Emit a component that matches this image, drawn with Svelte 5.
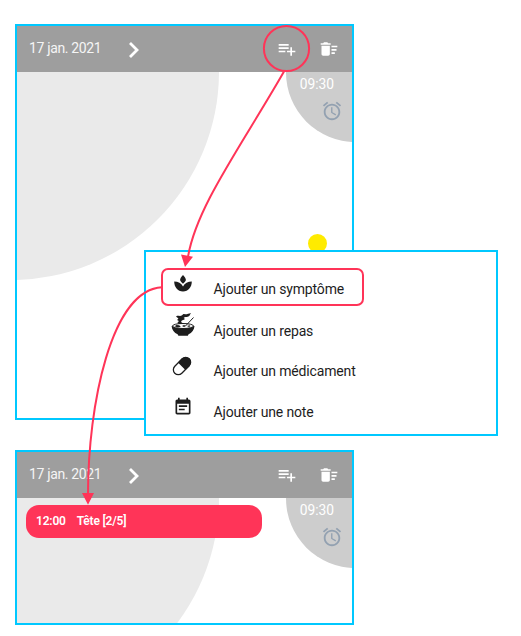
<script>
  const actions = [
    { icon: 'spa', label: 'Ajouter un symptôme', height: 38 },
    { icon: 'bowl', label: 'Ajouter un repas', height: 42 },
    { icon: 'pill', label: 'Ajouter un médicament', height: 39 },
    { icon: 'note', label: 'Ajouter une note', height: 42 }
  ];
</script>

{#snippet dayView(entry)}
  <header>
    <span class="date">17 jan. 2021</span>
    <svg class="chevron" width="14" height="20" viewBox="0 0 14 20"><path d="M3 3l7 7-7 7" fill="none" stroke="#fff" stroke-width="2.800" /></svg>
    <svg class="add" width="20" height="20" viewBox="0 0 24 24"><path fill="#fff" d="M14 10H2v2h12v-2zm0-4H2v2h12V6zm4 8v-4h-2v4h-4v2h4v4h2v-4h4v-2h-4zM2 16h8v-2H2v2z" /></svg>
    <svg class="sweep" width="20" height="20" viewBox="0 0 24 24"><path fill="#fff" d="M15 16h4v2h-4zm0-8h7v2h-7zm0 4h6v2h-6zM3 18c0 1.1.9 2 2 2h6c1.1 0 2-.9 2-2V8H3v10zM14 5h-3l-1-1H6L5 5H2v2h12z" /></svg>
  </header>
  <div class="body">
    <div class="disc large"></div>
    <div class="disc small"></div>
    {#if entry}
      <div class="entry"><span class="hour">{entry.hour}</span><span>{entry.text}</span></div>
    {:else}
      <div class="disc sun"></div>
    {/if}
    <div class="alarm">
      <span>09:30</span>
      <svg width="22" height="22" viewBox="0 0 24 24"><path fill="#93a1b1" d="M12.5 8H11v6l4.75 2.85.75-1.23-4-2.37zm4.837-6.19l4.607 3.845-1.28 1.535-4.61-3.843zm-10.674 0l1.282 1.536L3.337 7.19l-1.28-1.536zM12 4c-4.97 0-9 4.03-9 9s4.03 9 9 9 9-4.03 9-9-4.03-9-9-9zm0 16c-3.86 0-7-3.14-7-7s3.14-7 7-7 7 3.14 7 7-3.14 7-7 7z" /></svg>
    </div>
  </div>
{/snippet}

<main>
  <section class="panel first">{@render dayView(null)}</section>
  <section class="panel second">{@render dayView({ hour: '12:00', text: 'Tête [2/5]' })}</section>

  <ul class="menu">
    {#each actions as action, i}
      <li class:selected={i === 0} style:height="{action.height}px">
        <svg class={action.icon} width="24" height="24" viewBox="0 0 24 24">
          {#if action.icon === 'spa'}
            <path d="M12 2.900c2 1.900 2.900 3.700 2.900 5.200 0 1.100-1.500 2.300-2.900 3.700-1.400-1.400-2.900-2.600-2.900-3.700 0-1.500.9-3.300 2.900-5.200zM3.200 9.600c3.900.1 7.100 1.500 8.800 5 1.700-3.500 4.900-4.900 8.800-5 0 5.500-3.400 10-8.800 10s-8.800-4.500-8.800-10z" />
          {:else if action.icon === 'bowl'}
            <path d="M.6 13h22.900c-.3 4.100-2.600 6.700-5.900 8.300l-.8 1.500H7.400l-.8-1.500C3.200 19.700.9 17.100.6 13z" />
            <ellipse cx="12" cy="13" rx="10.500" ry="2.500" fill="#fff" stroke="#1d1d1d" stroke-width="1" />
            <path d="M3.500 13.300l2-1.300 2.800.3 1.500 1.600-3 .5zM11 13l2-1 2 1-2 1zM16 13l2.400-.8 1.200.9-1.600.8z" />
            <path d="M14.500 13L22.500 4.500" fill="none" stroke="#1d1d1d" stroke-width="1" />
            <path d="M5 3.500c2.300-1.500 4 .4 6.100-1.300C11.800 1.500 12.300.8 13.200 1c2.100.6 4.100-.4 6.700-1.100-1 1.800-1.300 3.300-3.200 3.800-1.400.5-2.700 0-4.100 1.200 1 .4 1.500 1 .8 1.600l-2.600.9-.8 1.700 2.300 1.500-4.300.4-1.700-.9 1.600-2-1.800-1.100 1.300-1.500z" />
          {:else if action.icon === 'pill'}
            <g transform="rotate(-45 12 12)">
              <rect x="0.900" y="6.600" width="22.200" height="10.800" rx="5.400" fill="#fff" stroke="#1d1d1d" stroke-width="1.400" />
              <path d="M11.500 6.200h6.100a5.800 5.800 0 0 1 0 11.600h-6.100z" />
            </g>
          {:else}
            <path d="M17 10H7v2h10v-2zm2-7h-1V1h-2v2H8V1H6v2H5c-1.110 0-2 .9-2 2v14c0 1.100.89 2 2 2h14c1.100 0 2-.9 2-2V5c0-1.100-.9-2-2-2zm0 16H5V8h14v11zm-5-5H7v2h7v-2z" />
          {/if}
        </svg>
        <span>{action.label}</span>
      </li>
    {/each}
  </ul>

  <svg class="links" width="521" height="636" viewBox="0 0 521 636">
    <g fill="none" stroke="#ff3458" stroke-width="2">
      <circle cx="286.500" cy="48.500" r="22.600" />
      <path d="M284 71.500C242 145 196 207 188 257" />
      <path d="M162 287.300C111 290 88 405 88 495" />
    </g>
    <path fill="#ff3458" d="M181 254.500l12 2.200-8 10.300zM82 493h12l-6 11.700z" />
  </svg>
</main>

<style>
  main {
    position: relative;
    box-sizing: border-box;
    width: 521px;
    height: 636px;
    padding: 24px 0 0 15px;
    display: flex;
    flex-direction: column;
    gap: 30px;
    background: #fff;
    font-family: Roboto, sans-serif;
    overflow: hidden;
  }
  svg { display: block; flex: none; overflow: visible; }
  .panel {
    box-sizing: border-box;
    width: 339px;
    border: 2px solid #00c8ff;
    overflow: hidden;
    display: flex;
    flex-direction: column;
  }
  .first { height: 396px; }
  .second { height: 175px; }
  header {
    position: relative;
    z-index: 1;
    height: 46px;
    flex: none;
    display: flex;
    align-items: center;
    background: #9e9e9e;
    color: #f5f5f5;
  }
  .date {
    width: 83px;
    padding: 0 0 2px 12px;
    font-size: 14px;
    letter-spacing: -0.350px;
    white-space: nowrap;
  }
  .chevron { margin-left: 15px; margin-top: 1px; }
  .add { margin-left: 136px; }
  .sweep { margin-left: 22px; }
  .body { position: relative; flex: 1; }
  .disc { position: absolute; border-radius: 50%; }
  .large { left: -214px; top: -208px; width: 416px; height: 416px; background: #eaeaea; }
  .small { left: 269px; top: -69.500px; width: 139px; height: 139px; background: #cdcdcd; }
  .sun { left: 290.500px; top: 161.500px; width: 19.500px; height: 19.500px; background: #ffeb00; }
  .alarm {
    position: absolute;
    top: 4px;
    right: 9px;
    display: flex;
    flex-direction: column;
    align-items: flex-end;
    gap: 7px;
    color: #fff;
    font-size: 13.800px;
    line-height: 17px;
  }
  .alarm span { margin-right: 9px; }
  .entry {
    position: relative;
    display: flex;
    align-items: center;
    box-sizing: border-box;
    width: 236px;
    height: 33px;
    margin: 7px 0 0 9px;
    padding: 0 0 1px 10px;
    gap: 11px;
    border-radius: 13px;
    background: #ff3458;
    color: #fff;
    font-size: 12px;
    letter-spacing: -0.200px;
    font-weight: 600;
  }
  .menu {
    position: absolute;
    left: 144px;
    top: 250px;
    box-sizing: border-box;
    width: 354px;
    height: 186px;
    margin: 0;
    padding: 16px 15px;
    list-style: none;
    border: 2px solid #00c8ff;
    background: #fff;
    color: #1d1d1d;
    font-size: 14px;
    letter-spacing: -0.150px;
  }
  li {
    box-sizing: border-box;
    width: 203px;
    padding: 3px 0 0 10px;
    display: flex;
    align-items: center;
  }
  .selected {
    padding-left: 8px;
    margin-bottom: 2px;
    border: 2px solid #ff3458;
    border-radius: 7px;
  }
  li span { margin-left: 18.500px; white-space: nowrap; }
  li svg { fill: #1d1d1d; margin-top: -10px; }
  li .bowl { margin-top: -12px; }
  li .pill { width: 22px; height: 22px; margin-right: 2px; margin-top: -11px; }
  li .note { width: 20px; height: 20px; margin-left: 2px; margin-right: 2px; }
  .links { position: absolute; z-index: 2; left: 0; top: 0; pointer-events: none; }
</style>
